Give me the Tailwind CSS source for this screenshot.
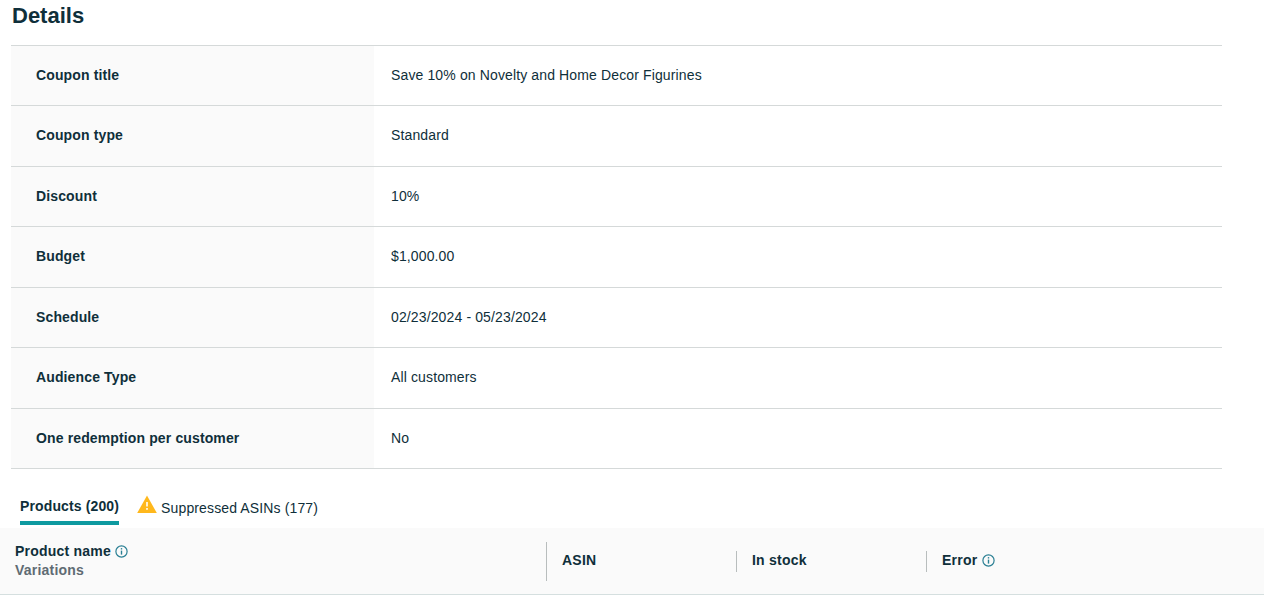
<!DOCTYPE html>
<html lang="en">
<head>
    <meta charset="UTF-8">
    <title>Coupon Details</title>
    <script src="https://cdn.jsdelivr.net/npm/@tailwindcss/browser@4"></script>
</head>
<body class="h-[595px] overflow-hidden bg-white font-['Liberation_Sans',Arial,sans-serif] text-[#0f2f3a]">
    <!-- Details -->
    <h2 class="pl-3 h-[44.6px] pt-[2px] text-[22px] leading-[28px] font-bold text-[#0f2f3a]">Details</h2>
    <div class="ml-[11px] w-[1211px] border-b border-[#d5d9d9] text-sm tracking-[0.13px]">
        <div class="flex h-[60.5px] border-t border-[#d5d9d9]">
            <div class="flex w-[363px] items-center bg-[#fafafa] pb-[1px] pl-[25px] font-bold">Coupon title</div>
            <div class="flex items-center pb-[1px] pl-[17px]">Save 10% on Novelty and Home Decor Figurines</div>
        </div>
        <div class="flex h-[60.5px] border-t border-[#d5d9d9]">
            <div class="flex w-[363px] items-center bg-[#fafafa] pb-[1px] pl-[25px] font-bold">Coupon type</div>
            <div class="flex items-center pb-[1px] pl-[17px]">Standard</div>
        </div>
        <div class="flex h-[60.5px] border-t border-[#d5d9d9]">
            <div class="flex w-[363px] items-center bg-[#fafafa] pb-[1px] pl-[25px] font-bold">Discount</div>
            <div class="flex items-center pb-[1px] pl-[17px]">10%</div>
        </div>
        <div class="flex h-[60.5px] border-t border-[#d5d9d9]">
            <div class="flex w-[363px] items-center bg-[#fafafa] pb-[1px] pl-[25px] font-bold">Budget</div>
            <div class="flex items-center pb-[1px] pl-[17px]">$1,000.00</div>
        </div>
        <div class="flex h-[60.5px] border-t border-[#d5d9d9]">
            <div class="flex w-[363px] items-center bg-[#fafafa] pb-[1px] pl-[25px] font-bold">Schedule</div>
            <div class="flex items-center pb-[1px] pl-[17px]">02/23/2024 - 05/23/2024</div>
        </div>
        <div class="flex h-[60.5px] border-t border-[#d5d9d9]">
            <div class="flex w-[363px] items-center bg-[#fafafa] pb-[1px] pl-[25px] font-bold">Audience Type</div>
            <div class="flex items-center pb-[1px] pl-[17px]">All customers</div>
        </div>
        <div class="flex h-[60.5px] border-t border-[#d5d9d9]">
            <div class="flex w-[363px] items-center bg-[#fafafa] pb-[1px] pl-[25px] font-bold">One redemption per customer</div>
            <div class="flex items-center pb-[1px] pl-[17px]">No</div>
        </div>
    </div>

    <!-- Tabs -->
    <div class="flex h-[59px] items-end pl-5 text-sm tracking-[0.13px]">
        <div class="mb-[3px] flex h-[30px] flex-col justify-between border-b-[4px] border-[#0e9aa0] pt-[1px] font-bold">Products (200)</div>
        <div class="mb-[7px] ml-[19px] flex h-[26px] items-start gap-[4px]">
            <svg class="-ml-[1px] h-[19px] w-[20px]" viewBox="0 0 20 19">
                <path d="M10 0.5 L19.8 18 H0.2 Z" fill="#ffb81c"/>
                <rect x="9.2" y="7" width="1.6" height="4.5" fill="#fff"/>
                <rect x="9.2" y="13" width="1.6" height="1.8" fill="#fff"/>
            </svg>
            <span class="pt-[3px]">Suppressed ASINs (177)</span>
        </div>
    </div>

    <!-- Product table header -->
    <div class="flex h-[67px] items-center border-b border-[#d5dfdf] bg-[#fafafa] text-sm font-bold tracking-[0.22px]">
        <div class="w-[546px] pl-[15px]">
            <div class="flex items-center gap-[4px] leading-[19px]">
                Product name
                <svg class="h-[13px] w-[13px]" viewBox="0 0 13 13" fill="none" stroke="#2a7f93" stroke-width="1.2">
                    <circle cx="6.5" cy="6.5" r="5.6"/>
                    <path d="M6.5 5.6 V9.6" stroke-width="1.4"/>
                    <path d="M6.5 3.1 V4.5" stroke-width="1.4"/>
                </svg>
            </div>
            <div class="leading-[19px] text-[#5f6b73]">Variations</div>
        </div>
        <div class="flex h-[39px] w-[190px] items-center border-l border-[#b8bdbd] pb-[2px] pl-[15px]">ASIN</div>
        <div class="flex h-[21px] w-[190px] items-center border-l border-[#b8bdbd] pb-[2px] pl-[15px]">In stock</div>
        <div class="flex h-[21px] items-center gap-[5px] border-l border-[#b8bdbd] pb-[2px] pl-[15px]">
            Error
            <svg class="h-[13px] w-[13px]" viewBox="0 0 13 13" fill="none" stroke="#2a7f93" stroke-width="1.2">
                <circle cx="6.5" cy="6.5" r="5.6"/>
                <path d="M6.5 5.6 V9.6" stroke-width="1.4"/>
                <path d="M6.5 3.1 V4.5" stroke-width="1.4"/>
            </svg>
        </div>
    </div>
</body>
</html>
